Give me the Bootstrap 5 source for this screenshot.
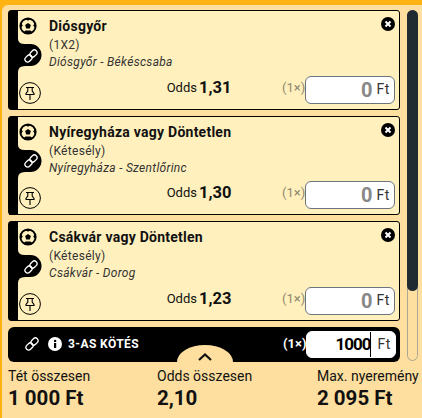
<!DOCTYPE html>
<html lang="hu"><head><meta charset="utf-8">
<link href="https://cdn.jsdelivr.net/npm/bootstrap@5.3.0/dist/css/bootstrap.min.css" rel="stylesheet">
<style>
html,body{margin:0;height:418px;overflow:hidden;background:#ffb313;font-family:Roboto,"Noto Sans",sans-serif;color:#111}
.slip{margin:5px 0 0 2px;height:413px;background:#fedf9f;border-top-left-radius:6px;padding:5px 4px 0 6px}
.slip-top{height:351px;gap:7px}
.stack{width:392px;gap:6px}
.bet{height:99.5px;flex:none;background:#fff0bd;border:1px solid #000;border-radius:3px}
.rail{width:40px;position:relative;padding:6px 0 5px 10px}
.rail-bg{position:absolute;left:0;top:0}
.rail>.ic{position:relative}
.ic-mid{margin-left:4px;margin-top:12.500px}
.body-col{padding-top:6px;min-width:0}
.ttl{font-size:14px;font-weight:700;line-height:18px;letter-spacing:.25px}
.sub{font-size:12px;line-height:17px;color:#333;letter-spacing:.3px}
.sub-a{margin-top:2px}
.bot{padding:0 4px 5px 0;height:37px;margin-top:auto}
.odds-l{font-size:13px;margin-right:2px;line-height:32px}
.odds-v{font-size:16.500px;font-weight:700;line-height:32px;width:83px}
.mult{font-size:13px;color:#8f8a70;width:22px;line-height:32px}
.stake{width:90px;height:28px;background:#fff;border:1px solid #6c757d;border-radius:6px;padding-right:4px;margin-left:1px}
.amt{font-size:20px;font-weight:700;color:#888;margin-right:4px}
.cur{font-size:14px;color:#333;letter-spacing:.6px}
.x{position:absolute;top:6px;right:4px}
.total{height:35px;flex:none;background:#000;border-radius:6px;color:#fff;padding-right:4px;position:relative}
.lnk{margin-left:16px}
.inf{margin-left:8px}
.total-t{font-size:12px;font-weight:700;margin-left:6px;letter-spacing:.4px}
.mult-w{font-size:13px;font-weight:700;width:22px}
.stake-w{border-color:#fff;height:27px}
.amt-w{color:#000;border-right:1.500px solid #000;line-height:25px;margin-right:6px;font-size:17px;font-weight:700;letter-spacing:-1px}
.tab{position:absolute;left:169px;bottom:0;width:56px;height:17px;background:#fedf9f;border-radius:28px 28px 0 0 / 17px 17px 0 0}
.bar-track{width:11px;height:351px;border:1px solid #a9a693;border-radius:6px;position:relative}
.bar-thumb{position:absolute;left:-1px;right:-1px;top:-1px;height:281px;background:#1f2a31;border-radius:6px}
.sums{padding-top:5px}
.lab{font-size:14px;line-height:20px}
.val{font-size:20.500px;font-weight:700;line-height:25px}
.c1{width:149px;flex:none}.c2{width:160px;flex:none}
</style></head><body>
<svg width="0" height="0" class="position-absolute"><defs>
<symbol id="ball" viewBox="0 0 18 18"><circle cx="9" cy="9" r="7.600" fill="#fff0bd" stroke="#000" stroke-width="2"/><path d="M9 6l2.900 2.100-1.100 3.400H7.200L6.100 8.100Z"/><path d="M6.200 1.800h5.600L9 3.800ZM16.300 6l.2 5-2.400-2.600ZM1.700 6l-.2 5 2.400-2.600ZM4.500 15.200l4.500 1.300 4.500-1.300-2-1.700H6.500Z"/></symbol>
<symbol id="chain" viewBox="0 0 16 16"><g fill="none" stroke="#fff" stroke-width="1.300" transform="rotate(-45 8 8)"><rect x=".6" y="5.300" width="7.800" height="5.400" rx="2.700"/><rect x="7.600" y="5.300" width="7.800" height="5.400" rx="2.700"/></g></symbol>
<symbol id="pin" viewBox="0 0 22 22"><g fill="none" stroke="#000"><circle cx="11" cy="11" r="10.400"/><path d="M7 5.500h8M8.800 5.500v3.500L7 11.500v1h8v-1L13.200 9V5.500M11 12.500V18" stroke-width="1.100"/></g></symbol>
<symbol id="cross" viewBox="0 0 14 14"><circle cx="7" cy="7" r="7"/><path d="M4.500 4.500l5 5m0-5l-5 5" stroke="#fff" stroke-width="2"/></symbol>
<symbol id="railshape" viewBox="0 0 34 98"><path d="M0 0H9V28Q9 33 16 33H21.500A11 11 0 0 1 21.500 55H16Q9 55 9 61V98H0Z"/></symbol>
</defs></svg>
<div class="slip">
<div class="d-flex slip-top">
<div class="d-flex flex-column stack">

<div class="bet d-flex position-relative">
<div class="rail d-flex flex-column flex-shrink-0"><svg class="rail-bg" width="34" height="98"><use href="#railshape"/></svg>
<svg class="ic" width="18" height="18"><use href="#ball"/></svg>
<svg class="ic ic-mid" width="16" height="16"><use href="#chain"/></svg>
<svg class="ic mt-auto" width="22" height="22"><use href="#pin"/></svg>
</div>
<div class="body-col flex-grow-1 d-flex flex-column">
<div class="ttl">Diósgyőr</div>
<div class="sub sub-a">(1X2)</div>
<div class="sub fst-italic">Diósgyőr - Békéscsaba</div>
<div class="bot d-flex justify-content-end align-items-end">
<span class="odds-l">Odds</span><span class="odds-v">1,31</span><span class="mult">(1×)</span>
<span class="stake d-flex justify-content-end align-items-center"><span class="amt">0</span><span class="cur">Ft</span></span>
</div></div>
<svg class="x" width="14" height="14"><use href="#cross"/></svg>
</div>

<div class="bet d-flex position-relative">
<div class="rail d-flex flex-column flex-shrink-0"><svg class="rail-bg" width="34" height="98"><use href="#railshape"/></svg>
<svg class="ic" width="18" height="18"><use href="#ball"/></svg>
<svg class="ic ic-mid" width="16" height="16"><use href="#chain"/></svg>
<svg class="ic mt-auto" width="22" height="22"><use href="#pin"/></svg>
</div>
<div class="body-col flex-grow-1 d-flex flex-column">
<div class="ttl">Nyíregyháza vagy Döntetlen</div>
<div class="sub sub-a">(Kétesély)</div>
<div class="sub fst-italic">Nyíregyháza - Szentlőrinc</div>
<div class="bot d-flex justify-content-end align-items-end">
<span class="odds-l">Odds</span><span class="odds-v">1,30</span><span class="mult">(1×)</span>
<span class="stake d-flex justify-content-end align-items-center"><span class="amt">0</span><span class="cur">Ft</span></span>
</div></div>
<svg class="x" width="14" height="14"><use href="#cross"/></svg>
</div>

<div class="bet d-flex position-relative">
<div class="rail d-flex flex-column flex-shrink-0"><svg class="rail-bg" width="34" height="98"><use href="#railshape"/></svg>
<svg class="ic" width="18" height="18"><use href="#ball"/></svg>
<svg class="ic ic-mid" width="16" height="16"><use href="#chain"/></svg>
<svg class="ic mt-auto" width="22" height="22"><use href="#pin"/></svg>
</div>
<div class="body-col flex-grow-1 d-flex flex-column">
<div class="ttl">Csákvár vagy Döntetlen</div>
<div class="sub sub-a">(Kétesély)</div>
<div class="sub fst-italic">Csákvár - Dorog</div>
<div class="bot d-flex justify-content-end align-items-end">
<span class="odds-l">Odds</span><span class="odds-v">1,23</span><span class="mult">(1×)</span>
<span class="stake d-flex justify-content-end align-items-center"><span class="amt">0</span><span class="cur">Ft</span></span>
</div></div>
<svg class="x" width="14" height="14"><use href="#cross"/></svg>
</div>

<div class="total d-flex align-items-center">
<svg class="lnk" width="16" height="16"><use href="#chain"/></svg>
<svg class="inf" width="14" height="14" viewBox="0 0 14 14"><circle cx="7" cy="7" r="7" fill="#fff"/><rect x="6" y="6" width="2.200" height="5"/><circle cx="7.100" cy="3.900" r="1.200"/></svg>
<span class="total-t">3-AS KÖTÉS</span>
<span class="ms-auto mult-w">(1×)</span>
<span class="stake stake-w d-flex justify-content-end align-items-center"><span class="amt-w">1000</span><span class="cur">Ft</span></span>
<div class="tab d-flex justify-content-center"><svg style="margin-top:8px" width="14" height="8" viewBox="0 0 14 8" fill="none" stroke="#111" stroke-width="2.200"><path d="M1 7l6-5.500L13 7"/></svg></div>
</div>
</div>
<div class="bar-track flex-shrink-0"><div class="bar-thumb"></div></div>
</div>
<div class="sums d-flex">
<div class="c1"><div class="lab">Tét összesen</div><div class="val">1 000 Ft</div></div>
<div class="c2"><div class="lab">Odds összesen</div><div class="val">2,10</div></div>
<div class="flex-shrink-0"><div class="lab text-nowrap">Max. nyeremény</div><div class="val">2 095 Ft</div></div>
</div>
</div>
<script src="https://cdn.jsdelivr.net/npm/bootstrap@5.3.0/dist/js/bootstrap.bundle.min.js"></script>
</body></html>
